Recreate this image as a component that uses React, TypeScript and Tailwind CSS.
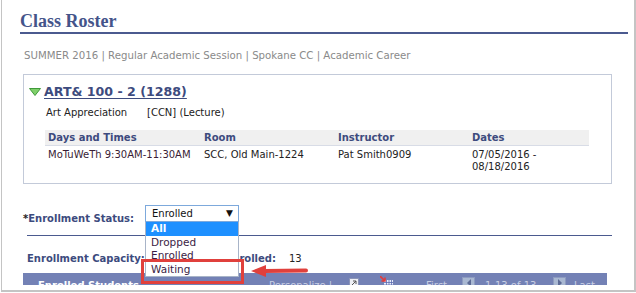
const sans = { fontFamily: '"DejaVu Sans", Verdana, sans-serif' }

function SectionBox() {
  return (
    <div className="ml-[3px] mt-[11px] w-[589px] h-[110px] border border-[#c3cad9] pl-[5px] pt-[9px]">
      <div className="flex items-center h-[16px] gap-[3px]">
        <svg width="12" height="8" viewBox="0 0 12 8">
          <polygon points="0.5,0.5 11.5,0.5 6,7.5" fill="#7fcf6a" stroke="#3f9a3a" strokeWidth="1" />
        </svg>
        <a className="text-[12.6px] leading-[16px] font-bold text-[#3d4b7e] underline underline-offset-2">ART&amp; 100 - 2 (1288)</a>
      </div>
      <div className="flex mt-[6px] ml-[17px] text-[10px] leading-[14px] text-[#222]">
        <span className="w-[101px]">Art Appreciation</span>
        <span>[CCN] (Lecture)</span>
      </div>
      <div className="mt-[10px] ml-[16px] w-[544px] text-[10px]">
        <div className="flex h-[16px] items-center bg-[#f0f0f0] border-b border-[#d8dce6] font-bold text-[#3d4b7e] pl-[3px]">
          <span className="w-[156px]">Days and Times</span>
          <span className="w-[134px]">Room</span>
          <span className="w-[134px]">Instructor</span>
          <span>Dates</span>
        </div>
        <div className="flex pt-[3px] pl-[3px] leading-[12px] text-[#222]">
          <span className="w-[156px] text-[#3a1d35]">MoTuWeTh 9:30AM-11:30AM</span>
          <span className="w-[134px]">SCC, Old Main-1224</span>
          <span className="w-[134px]">Pat Smith0909</span>
          <span>
            07/05/2016 -<br />08/18/2016
          </span>
        </div>
      </div>
    </div>
  )
}

function StatusDropdown() {
  const items = ['All', 'Dropped', 'Enrolled', 'Waiting']
  return (
    <div className="absolute left-[145px] top-[205px] w-[94px] text-[10px]">
      <div className="h-[17px] border border-[#7da9dc] bg-white flex items-center justify-between pl-[6px] pr-[5px] text-[#111]">
        <span>Enrolled</span>
        <span className="text-[9px]">▼</span>
      </div>
      <div className="border border-t-0 border-[#a8b4c8] bg-white leading-[13.5px]">
        {items.map((item, i) => (
          <div
            key={item}
            className={i === 0 ? 'bg-[#1e90ff] text-white font-bold pl-[5px] text-[10.5px]' : 'text-[#3a1d45] pl-[5px] text-[10.5px]'}
          >
            {item}
          </div>
        ))}
      </div>
    </div>
  )
}

function GridBar() {
  return (
    <div className="mt-[7px] ml-[3px] w-[584px] h-[20px] bg-[#7381b5] flex items-start pt-[7px] text-[10px] leading-[12px] font-bold">
      <span className="ml-[15px] w-[231px] text-white">Enrolled Students</span>
      <span className="w-[80px] text-[#c9cfe4] font-normal">Personalize | Find | View All |</span>
      <span className="mt-[-2px] w-[10px] h-[10px] bg-[#eef0f6] border border-[#8c95b8] flex items-center justify-center">
        <svg width="6" height="6" viewBox="0 0 6 6">
          <path d="M1 5 L5 1 M2 1 H5 V4" stroke="#555" strokeWidth="1" fill="none" />
        </svg>
      </span>
      <span className="ml-[21px] mt-[-4px] relative w-[12px] h-[12px]">
        <svg width="13" height="12" viewBox="0 0 13 12">
          <rect x="4" y="4" width="9" height="8" fill="#e8ecfa" />
          <path d="M4 6.5 H13 M4 9 H13 M6.5 4 V12 M9 4 V12 M11.5 4 V12" stroke="#5a6bb0" strokeWidth="0.8" />
          <path d="M0 0 L5 5 M5 1.5 V5 H1.5" stroke="#e23a3a" strokeWidth="1.6" fill="none" />
        </svg>
      </span>
      <span className="ml-[34px] w-[36px] text-[#c9cfe4] font-normal">First</span>
      <span className="mt-[-3px] w-[13px] h-[12px] bg-[#a9b8d2] border border-[#8d9bc0] flex items-center justify-center">
        <span className="w-0 h-0 border-y-[4px] border-y-transparent border-r-[4px] border-r-[#5d6b96]" />
      </span>
      <span className="ml-[10px] w-[68px] text-[#c9cfe4] font-normal">1-13 of 13</span>
      <span className="mt-[-3px] w-[13px] h-[12px] bg-[#a9b8d2] border border-[#8d9bc0] flex items-center justify-center">
        <span className="w-0 h-0 border-y-[4px] border-y-transparent border-l-[4px] border-l-[#5d6b96]" />
      </span>
      <span className="ml-[8px] text-[#c9cfe4] font-normal">Last</span>
    </div>
  )
}

export default function App() {
  return (
    <div className="w-[636px] h-[293px] bg-white overflow-hidden relative" style={sans}>
      <div className="ml-[1px] w-[635px] h-[292px] border-l border-r-2 border-b-2 border-[#c4c4c4]">
        <div className="h-[285px] overflow-hidden pl-[18px]">
          <div className="pt-[11px] pb-[1px] border-b-2 border-[#4b5a8f] w-[608px]">
            <h1 className="text-[18px] font-bold text-[#44548a] leading-[20px]" style={{ fontFamily: '"Liberation Serif", Georgia, serif' }}>
              Class Roster
            </h1>
          </div>
          <div className="mt-[15px] ml-[4px] text-[10.2px] leading-[14px] text-[#8a8a8a]">
            SUMMER 2016 | Regular Academic Session | Spokane CC | Academic Career
          </div>
          <SectionBox />
          <div className="mt-[28px] ml-[3px] text-[10px] leading-[14px] font-bold text-[#3d4b7e]">
            <span className="text-[#222]">*</span>Enrollment Status:
          </div>
          <div className="mt-[9px] ml-[7px] w-[585px] border-b border-[#4b5a8f]" />
          <div className="mt-[16px] ml-[7px] flex items-center text-[10px] leading-[14px] font-bold text-[#3d4b7e]">
            <span className="w-[150px]">Enrollment Capacity:</span>
            <span className="w-[99px] text-right">Total Enrolled:</span>
            <span className="ml-[13px] font-normal text-[#222]">13</span>
          </div>
          <GridBar />
        </div>
      </div>
      <StatusDropdown />
      <div className="absolute left-[141px] top-[259px] w-[103px] h-[25px] border-[3px] border-[#e0403c]" />
      <svg className="absolute left-[250px] top-[264px]" width="58" height="14" viewBox="0 0 58 14">
        <path d="M56 6.5 L14 7" stroke="#e0403c" strokeWidth="4" strokeLinecap="round" />
        <polygon points="1,7 16,1 16,13" fill="#e0403c" />
      </svg>
    </div>
  )
}
